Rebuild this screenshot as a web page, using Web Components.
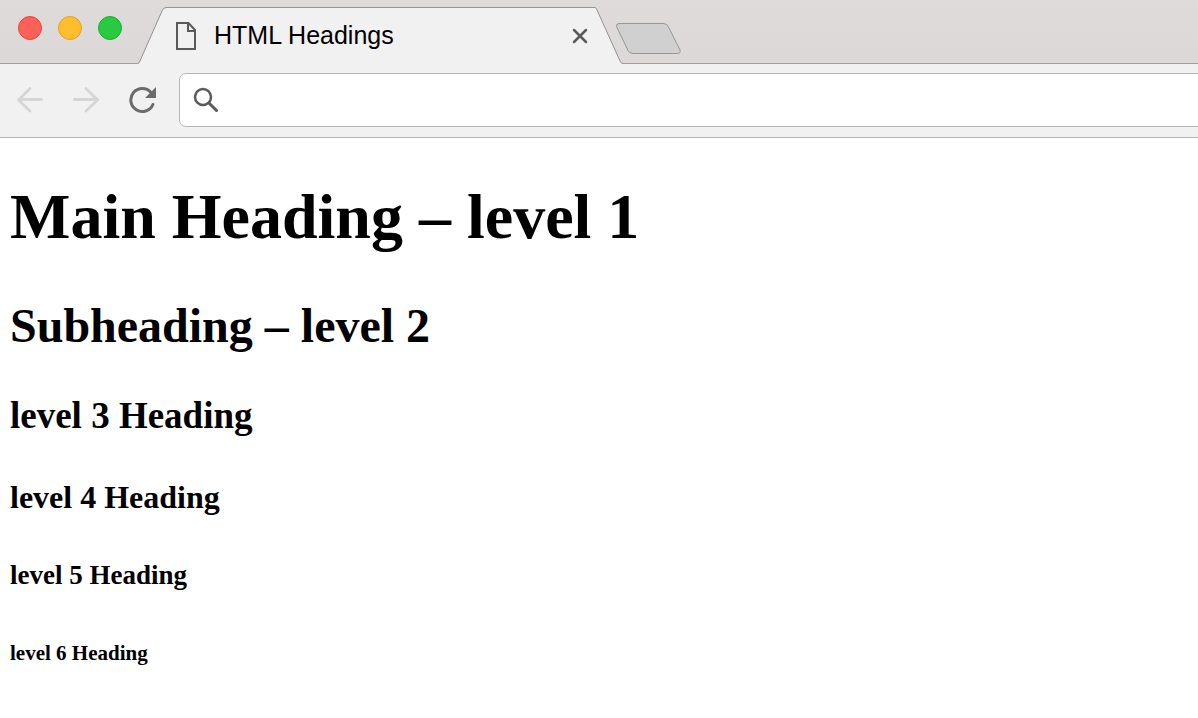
<!DOCTYPE html>
<html lang="en">
<head>
<meta charset="utf-8">
<title>HTML Headings</title>
<style>
  body { margin: 0; background: #fff; color: #000; }
</style>
</head>
<body>
<browser-window>
  <tab-strip slot="tabs"><browser-tab>HTML Headings</browser-tab></tab-strip>
  <browser-toolbar slot="toolbar"></browser-toolbar>
  <heading-page></heading-page>
</browser-window>

<script>
function define(name, html) {
  const template = document.createElement('template');
  template.innerHTML = html;
  customElements.define(name, class extends HTMLElement {
    constructor() {
      super();
      this.attachShadow({ mode: 'open' }).append(template.content.cloneNode(true));
    }
  });
}

define('browser-window', `
  <style>
    :host { display: flex; flex-direction: column; min-height: 100vh; overflow: hidden; }
    main { flex: 1; background: #fff; }
  </style>
  <slot name="tabs"></slot>
  <slot name="toolbar"></slot>
  <main><slot></slot></main>`);

define('traffic-lights', `
  <style>
    :host { display: flex; gap: 16px; padding: 16px 16px 0 18px; }
    button { box-sizing: border-box; width: 24px; height: 24px; padding: 0; border: 1px solid; border-radius: 50%; }
    .close { background: #ff6058; border-color: #e2463f; }
    .min { background: #ffbe2e; border-color: #dfa023; }
    .max { background: #28ca42; border-color: #1dad2b; }
  </style>
  <button class="close" aria-label="Close window"></button>
  <button class="min" aria-label="Minimize window"></button>
  <button class="max" aria-label="Zoom window"></button>`);

define('browser-tab', `
  <style>
    :host { display: flex; height: 57px; flex: 0 1 485px; min-width: 0; }
    svg { display: block; flex: none; }
    .body { flex: 1; min-width: 0; display: flex; align-items: center; box-sizing: border-box;
            background: #f1f1f1; border-top: 1px solid #949294; padding: 0 7px 0 9px; }
    .title { flex: 1; margin-left: 17px; padding-bottom: 2px; font: 25px/30px "Liberation Sans", Arial, sans-serif;
             white-space: nowrap; overflow: hidden; }
    button { display: flex; padding: 0; border: 0; background: none; }
  </style>
  <svg width="28" height="57" viewBox="0 0 28 57" aria-hidden="true">
    <path d="M0 57V56.500Q1 56 1.500 55L24 4Q25.500 .500 28 .500V57Z" fill="#f1f1f1"/>
    <path d="M0 56.500Q1 56 1.500 55L24 4Q25.500 .500 28 .500" fill="none" stroke="#949294"/>
  </svg>
  <div class="body">
    <svg width="22" height="30" viewBox="0 0 22 30" fill="none" stroke="#5a5a5a" stroke-width="2" aria-hidden="true">
      <path d="M2 2H13.500L20 9V28H2Z"/><path d="M13 2V10H20"/>
    </svg>
    <span class="title"><slot></slot></span>
    <button aria-label="Close tab">
      <svg width="16" height="16" viewBox="0 0 16 16" stroke="#5a5a5a" stroke-width="2.500" stroke-linecap="round"><path d="M2 2L14 14M14 2L2 14"/></svg>
    </button>
  </div>
  <svg width="28" height="57" viewBox="0 0 28 57" aria-hidden="true">
    <path d="M0 57V.500Q1 .500 2 3L25 54Q26 56.500 28 56.500V57Z" fill="#f1f1f1"/>
    <path d="M0 .500Q1 .500 2 3L25 54Q26 56.500 28 56.500" fill="none" stroke="#949294"/>
  </svg>`);

define('tab-strip', `
  <style>
    :host { display: flex; height: 64px; background: linear-gradient(#dfdbdb, #dcd8d8);
            box-shadow: inset 0 -1px #a09e9f; }
    ::slotted(browser-tab) { margin-top: 7px; }
    .new { display: flex; align-self: flex-start; margin: 22px 0 0 -9px; padding: 0; border: 0; background: none; }
  </style>
  <traffic-lights></traffic-lights>
  <slot></slot>
  <button class="new" aria-label="New tab">
    <svg width="68" height="33" viewBox="0 0 68 33" fill="#d0d0d0" stroke="#979597">
      <path d="M5 1.500H49Q52.500 1.500 54 4L66 28Q67 31.500 63.500 31.500H19Q15.500 31.500 14 28.500L2.500 4.500Q2 1.500 5 1.500Z"/>
    </svg>
  </button>`);

define('browser-toolbar', `
  <style>
    :host { display: flex; align-items: center; box-sizing: border-box; height: 74px;
            padding: 0 0 2px 16px; background: #f1f1f1; border-bottom: 1px solid #b4b4b4; }
    nav { display: flex; gap: 28px; margin-right: 23px; }
    button { display: flex; padding: 0; border: 0; background: none; }
    svg { display: block; flex: none; }
    .box { flex: 1; display: flex; align-items: center; box-sizing: border-box; height: 54px;
           margin-right: -8px; padding: 0 13px; gap: 12px; background: #fff; border: 1px solid #b7b7b7; border-radius: 7px; }
    input { flex: 1; min-width: 0; padding: 0; border: 0; outline: 0; background: none;
            font: 25px/30px "Liberation Sans", Arial, sans-serif; }
  </style>
  <nav aria-label="Navigation">
    <button aria-label="Back" disabled>
      <svg width="28" height="28" viewBox="0 0 28 28" fill="none" stroke="#d5d5d5" stroke-width="2.800" stroke-linecap="round" stroke-linejoin="round"><path d="M14 2.500L2.500 14L14 25M2.500 13.500H25.500"/></svg>
    </button>
    <button aria-label="Forward" disabled>
      <svg width="28" height="28" viewBox="0 0 28 28" fill="none" stroke="#d5d5d5" stroke-width="2.800" stroke-linecap="round" stroke-linejoin="round"><path d="M14 2.500L25.500 14L14 25M25.500 13.500H2.500"/></svg>
    </button>
    <button aria-label="Reload">
      <svg width="28" height="28" viewBox="0 0 28 28"><path d="M24.900 18.500A11.500 11.500 0 1 1 23 6.500" fill="none" stroke="#6b6b6b" stroke-width="3" stroke-linecap="round"/><path d="M28 1V12H17Z" fill="#6b6b6b"/></svg>
    </button>
  </nav>
  <div class="box">
    <svg width="26" height="26" viewBox="0 0 26 26" fill="none" stroke="#5a5a5a" aria-hidden="true"><circle cx="10" cy="10" r="8" stroke-width="2.500"/><path d="M16 16L23.500 23.500" stroke-width="3" stroke-linecap="round"/></svg>
    <input type="text" aria-label="Address and search">
  </div>`);

define('heading-page', `
  <style>
    :host { display: block; padding: 42px 10px 40px; font-family: "Liberation Serif", "Times New Roman", serif; }
    h1, h2, h3, h4, h5, h6 { margin: 0; font-weight: 700; }
    h1 { font-size: 64px; line-height: 74px; margin-bottom: 44px; }
    h2 { font-size: 48px; line-height: 56px; margin-bottom: 41px; }
    h3 { font-size: 37px; line-height: 42px; margin-bottom: 42px; }
    h4 { font-size: 32px; line-height: 36px; margin-bottom: 45px; }
    h5 { font-size: 27px; line-height: 30px; margin-bottom: 51px; }
    h6 { font-size: 21px; line-height: 24px; }
  </style>
  <h1>Main Heading – level 1</h1>
  <h2>Subheading – level 2</h2>
  <h3>level 3 Heading</h3>
  <h4>level 4 Heading</h4>
  <h5>level 5 Heading</h5>
  <h6>level 6 Heading</h6>`);
</script>
</body>
</html>
